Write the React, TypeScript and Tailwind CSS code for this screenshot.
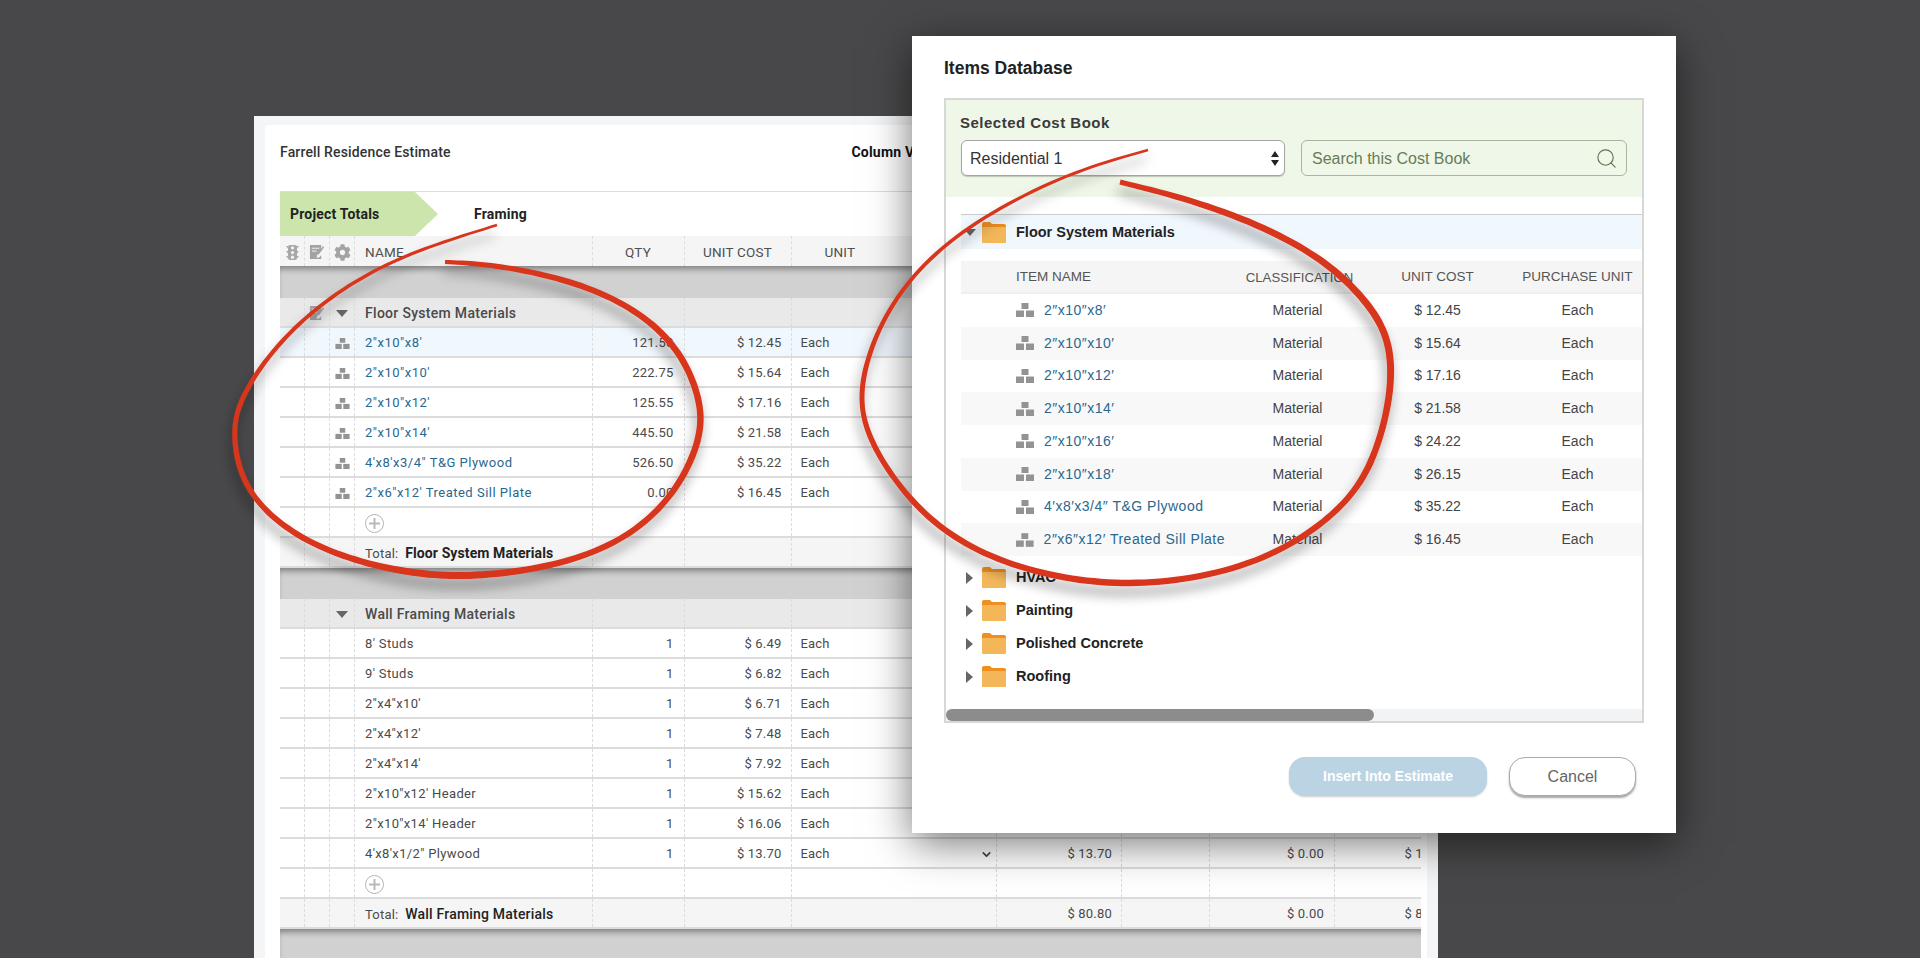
import { ChevronDown, Search } from "lucide-react";
import { FaCog } from "react-icons/fa";

const tableCols =
  "grid grid-cols-[25px_25px_25px_237.5px_92px_107px_205.5px_125px_88px_125px_125px]";
const dialogCols = "grid grid-cols-[264px_145px_135px_145px]";

const floorItems = [
  { name: "2″x10″x8′", qty: "121.50", cost: "$ 12.45", active: true },
  { name: "2″x10″x10′", qty: "222.75", cost: "$ 15.64" },
  { name: "2″x10″x12′", qty: "125.55", cost: "$ 17.16" },
  { name: "2″x10″x14′", qty: "445.50", cost: "$ 21.58" },
  { name: "4′x8′x3/4″ T&G Plywood", qty: "526.50", cost: "$ 35.22" },
  { name: "2″x6″x12′ Treated Sill Plate", qty: "0.00", cost: "$ 16.45" },
];

const wallItems = [
  { name: "8' Studs", cost: "$ 6.49" },
  { name: "9' Studs", cost: "$ 6.82" },
  { name: "2''x4''x10'", cost: "$ 6.71" },
  { name: "2''x4''x12'", cost: "$ 7.48" },
  { name: "2''x4''x14'", cost: "$ 7.92" },
  { name: "2\"x10\"x12' Header", cost: "$ 15.62" },
  { name: "2\"x10\"x14' Header", cost: "$ 16.06" },
  { name: "4'x8'x1/2\" Plywood", cost: "$ 13.70" },
];

const bookItems = [
  { name: "2″x10″x8′", cost: "$ 12.45" },
  { name: "2″x10″x10′", cost: "$ 15.64" },
  { name: "2″x10″x12′", cost: "$ 17.16" },
  { name: "2″x10″x14′", cost: "$ 21.58" },
  { name: "2″x10″x16′", cost: "$ 24.22" },
  { name: "2″x10″x18′", cost: "$ 26.15" },
  { name: "4′x8′x3/4″ T&G Plywood", cost: "$ 35.22" },
  { name: "2″x6″x12′ Treated Sill Plate", cost: "$ 16.45" },
];

const folders = ["HVAC", "Painting", "Polished Concrete", "Roofing"];

type Pt = [number, number, number];

// red marker strokes, traced as x, y, stroke width
const leftLoop: Pt[] = [
  [497, 225, 2.5], [442, 242, 3], [392, 260, 3.2], [342, 288, 3.6], [298, 322, 4],
  [262, 362, 4.5], [238, 403, 5], [233, 427, 5], [236, 463, 5.5], [250, 497, 5.5],
  [282, 527, 6], [322, 550, 6], [375, 567, 6.5], [425, 575, 7], [465, 577, 7],
  [525, 572, 6.5], [585, 558, 6], [632, 535, 6], [668, 503, 6], [692, 463, 6.5],
  [703, 427, 6.5], [700, 400, 6.5], [688, 365, 6.5], [665, 332, 6.5], [625, 302, 6],
  [575, 282, 6], [525, 270, 5.5], [478, 263, 5], [445, 262, 4],
];

const rightLoop: Pt[] = [
  [1148, 150, 2.5], [1083, 167, 3], [1017, 197, 3.2], [950, 237, 3.6], [907, 280, 4],
  [877, 327, 4.5], [860, 380, 5], [861, 413, 5], [871, 443, 5.5], [893, 479, 5.5],
  [923, 515, 6], [963, 545, 6], [1017, 569, 6], [1083, 582, 6.5], [1133, 585, 6.5],
  [1200, 579, 6], [1267, 560, 6], [1317, 529, 6], [1350, 499, 6], [1372, 467, 6.5],
  [1388, 413, 6.5], [1393, 370, 7], [1388, 335, 7], [1372, 308, 7], [1345, 278, 7],
  [1310, 250, 6.5], [1250, 220, 6.5], [1183, 197, 6], [1120, 182, 5],
];

function brushPath(pts: Pt[]) {
  let samples: Pt[] = [];
  for (let i = 0; i < pts.length - 1; i++) {
    const p0 = pts[Math.max(i - 1, 0)];
    const p1 = pts[i];
    const p2 = pts[i + 1];
    const p3 = pts[Math.min(i + 2, pts.length - 1)];
    for (let s = 0; s < 8; s++) {
      const t = s / 8;
      const at = (k: number) =>
        0.5 *
        (2 * p1[k] +
          (p2[k] - p0[k]) * t +
          (2 * p0[k] - 5 * p1[k] + 4 * p2[k] - p3[k]) * t * t +
          (3 * p1[k] - p0[k] - 3 * p2[k] + p3[k]) * t * t * t);
      samples.push([at(0), at(1), p1[2] + (p2[2] - p1[2]) * t]);
    }
  }
  samples.push(pts[pts.length - 1]);

  // trace points are hand-read, so iron out the kinks
  for (let pass = 0; pass < 60; pass++) {
    samples = samples.map((p, i) => {
      if (i === 0 || i === samples.length - 1) return p;
      const l = samples[i - 1];
      const r = samples[i + 1];
      return [(l[0] + 2 * p[0] + r[0]) / 4, (l[1] + 2 * p[1] + r[1]) / 4, p[2]] as Pt;
    });
  }

  const a: string[] = [];
  const b: string[] = [];
  samples.forEach((p, i) => {
    const prev = samples[Math.max(i - 1, 0)];
    const next = samples[Math.min(i + 1, samples.length - 1)];
    const dx = next[0] - prev[0];
    const dy = next[1] - prev[1];
    const len = Math.hypot(dx, dy) || 1;
    const nx = (-dy / len) * (p[2] / 2);
    const ny = (dx / len) * (p[2] / 2);
    a.push(`${(p[0] + nx).toFixed(1)} ${(p[1] + ny).toFixed(1)}`);
    b.unshift(`${(p[0] - nx).toFixed(1)} ${(p[1] - ny).toFixed(1)}`);
  });
  return `M${a.join("L")}L${b.join("L")}Z`;
}

function BricksIcon({ width = 15, height = 11 }: { width?: number; height?: number }) {
  return (
    <svg width={width} height={height} viewBox="0 0 18 14" fill="#939393">
      <rect x="5.5" y="0" width="7" height="6" />
      <rect x="0" y="7.5" width="8" height="6.5" />
      <rect x="10" y="7.5" width="8" height="6.5" />
    </svg>
  );
}

function NoteIcon() {
  return (
    <svg width="16" height="16" viewBox="0 0 17 17">
      <path d="M1 1h12v5l-4 5-1 4 3-1 2-2v4H1z" fill="#a3a3a3" />
      <path d="M3 4.5h8M3 7.5h5" stroke="#f5f5f5" strokeWidth="1" />
      <path d="M15.5 3 9.5 11" stroke="#a3a3a3" strokeWidth="1.6" />
    </svg>
  );
}

function TrafficIcon() {
  return (
    <svg width="13" height="15" viewBox="0 0 13 15" fill="#a8a8a8">
      <rect x="2" y="0" width="9" height="15" rx="2" />
      <path d="M0 1h2v2.5zM13 1h-2v2.5zM0 6h2v2.5zM13 6h-2v2.5zM0 11h2v2.5zM13 11h-2v2.5z" />
      <circle cx="6.5" cy="2.8" r="1.6" fill="#f5f5f5" />
      <circle cx="6.5" cy="7.5" r="1.6" fill="#f5f5f5" />
      <circle cx="6.5" cy="12.2" r="1.6" fill="#f5f5f5" />
    </svg>
  );
}

function FolderIcon() {
  return (
    <svg width="24" height="21" viewBox="0 0 24 21">
      <path d="M0 2a2 2 0 0 1 2-2h6l2 2h12a2 2 0 0 1 2 2v5H0z" fill="#ef8f1f" />
      <path d="M0 5h24v15a1 1 0 0 1-1 1H1a1 1 0 0 1-1-1z" fill="#f3b75a" />
    </svg>
  );
}

function AddIcon() {
  return (
    <div className="flex h-[19px] w-[19px] items-center justify-center rounded-full border border-[#b5b5b5] bg-white">
      <svg width="11" height="11" viewBox="0 0 11 11">
        <path d="M5.5 0v11M0 5.5h11" stroke="#b9b9b9" strokeWidth="2" />
      </svg>
    </div>
  );
}

function Cell({ className = "", children }: { className?: string; children?: React.ReactNode }) {
  return (
    <div className={`flex items-center overflow-hidden whitespace-nowrap border-r border-dashed border-[#dcdcdc] pt-[2px] ${className}`}>
      {children}
    </div>
  );
}

function TableRow({
  className = "",
  icon,
  second,
  name,
  qty,
  cost,
  unit,
  unitCost,
  extra,
  last,
}: {
  className?: string;
  icon?: React.ReactNode;
  second?: React.ReactNode;
  name?: React.ReactNode;
  qty?: string;
  cost?: string;
  unit?: string;
  unitCost?: string;
  extra?: string;
  last?: string;
}) {
  return (
    <div className={`${tableCols} h-[30px] border-b-2 border-[#dcdcdc] text-[13px] tracking-[0.2px] text-[#4a4a4a] ${className}`}>
      <Cell />
      <Cell className="justify-center">{second}</Cell>
      <Cell className="justify-center">{icon}</Cell>
      <Cell className="pl-[10px]">{name}</Cell>
      <Cell className="justify-end pr-[10px]">{qty}</Cell>
      <Cell className="justify-end pr-[9px]">{cost}</Cell>
      <Cell className="justify-between pl-[9px] pr-[3px]">
        {unit}
        {unit && unitCost && <ChevronDown size={13} strokeWidth={3} className="text-[#444]" />}
      </Cell>
      <Cell className="justify-end pr-[9px]">{unitCost}</Cell>
      <Cell />
      <Cell className="justify-end pr-[10px]">{extra}</Cell>
      <Cell className="justify-end pr-[10px]">{last}</Cell>
    </div>
  );
}

function DownTriangle() {
  return (
    <svg width="12" height="7" viewBox="0 0 12 7">
      <path d="M0 0h12L6 7z" fill="#666" />
    </svg>
  );
}

function TableHeader() {
  return (
    <div className={`${tableCols} h-[30px] bg-[#f5f5f5] text-[13.5px] tracking-[0.2px] text-[#4f4f4f]`}>
      <Cell className="justify-center"><TrafficIcon /></Cell>
      <Cell className="justify-center"><NoteIcon /></Cell>
      <Cell className="justify-center text-[17px] text-[#a3a3a3]"><FaCog /></Cell>
      <Cell className="pl-[10px]">NAME</Cell>
      <Cell className="justify-center">QTY</Cell>
      <Cell className="justify-center">UNIT COST</Cell>
      <Cell className="pl-[33px]">UNIT</Cell>
      <Cell />
      <Cell />
      <Cell />
      <Cell />
    </div>
  );
}

function Band({ className = "" }: { className?: string }) {
  return <div className={`bg-[#d1d1d1] shadow-[inset_0_6px_6px_-3px_rgba(0,0,0,0.4)] ${className}`} />;
}

function EstimateSheet() {
  return (
    <div className="ml-[254px] h-[842px] w-[1184px] overflow-hidden bg-[#f4f5f6] pl-[11px] pr-[11px] pt-[9px]">
      <div className="h-full rounded-t bg-white pl-[15px] pr-[6px] font-['Roboto',sans-serif]">
        <div className="flex h-[66px] items-start pt-[17px]">
          <div className="w-[571.5px] text-[14px] font-medium tracking-[0.15px] text-[#333]">Farrell Residence Estimate</div>
          <div className="text-[14px] font-bold tracking-[0.2px] text-[#111]">Column View</div>
        </div>
        <div className="flex h-[45px] items-center border-t border-[#ddd] text-[14px] font-bold tracking-[0.2px] text-[#222]">
          <div className="flex h-full w-[158px] items-center bg-[#cbe5ad] pl-[10px] [clip-path:polygon(0_0,135px_0,158px_50%,135px_100%,0_100%)]">
            Project Totals
          </div>
          <div className="ml-[36px]">Framing</div>
        </div>
        <div className="overflow-hidden">
          <div className="w-[1300px]">
            <TableHeader />
            <Band className="h-[32px]" />
            <TableRow
              className="bg-[#e9e9e9] text-[14px] font-medium tracking-[0.3px]"
              second={<NoteIcon />}
              icon={<DownTriangle />}
              name="Floor System Materials"
            />
            {floorItems.map((row) => (
              <TableRow
                key={row.name}
                className={row.active ? "bg-[#f0f7fd]" : "bg-white"}
                icon={<BricksIcon />}
                name={<span className="tracking-[0.5px] text-[#29678f]">{row.name}</span>}
                qty={row.qty}
                cost={row.cost}
                unit="Each"
              />
            ))}
            <TableRow name={<AddIcon />} />
            <TableRow
              className="h-[29px] bg-[#f5f5f5]"
              name={<span>Total:&nbsp; <b className="text-[14px] tracking-[0.1px] text-[#222]">Floor System Materials</b></span>}
            />
            <Band className="h-[31px]" />
            <TableRow
              className="bg-[#e9e9e9] text-[14px] font-medium tracking-[0.3px]"
              icon={<DownTriangle />}
              name="Wall Framing Materials"
            />
            {wallItems.map((row) => (
              <TableRow
                key={row.name}
                name={<span className="tracking-[0.35px]">{row.name}</span>}
                qty="1"
                cost={row.cost}
                unit="Each"
                unitCost={row.cost}
                extra="$ 0.00"
                last={row.cost}
              />
            ))}
            <TableRow name={<AddIcon />} />
            <TableRow
              className="h-[29px] bg-[#f5f5f5]"
              name={<span>Total:&nbsp; <b className="text-[14px] font-medium tracking-[0.2px] text-[#222]">Wall Framing Materials</b></span>}
              unitCost="$ 80.80"
              extra="$ 0.00"
              last="$ 80.80"
            />
            <Band className="h-[40px]" />
          </div>
        </div>
      </div>
    </div>
  );
}

function ItemsDialog() {
  return (
    <div className="absolute left-[912px] top-[36px] flex h-[797px] w-[764px] flex-col bg-white px-[32px] pt-[20px] font-['Liberation_Sans',sans-serif] shadow-[0_10px_40px_rgba(0,0,0,0.55)]">
      <div className="text-[17.5px] font-bold leading-[24px] text-[#222]">Items Database</div>
      <div className="mt-[18px] flex h-[625px] flex-col overflow-hidden border-2 border-[#d5d8d5]">
        <div className="h-[97px] shrink-0 bg-[#eff7e8] px-[14px] pt-[13px]">
          <div className="text-[15px] font-bold leading-[19px] tracking-[0.5px] text-[#3a3a3a]">Selected Cost Book</div>
          <div className="ml-[1px] mt-[8px] flex gap-[16px]">
            <div className="flex h-[36px] w-[324px] items-center justify-between rounded-[6px] border border-[#a5a5a5] bg-white pl-[8px] pr-[5px] pt-[1px] text-[16px] text-[#333] shadow-[0_1px_1px_rgba(0,0,0,0.2)]">
              Residential 1
              <svg width="8" height="15" viewBox="0 0 8 15" fill="#222">
                <path d="M4 0 8 6H0zM4 15 0 9h8z" />
              </svg>
            </div>
            <div className="flex h-[36px] w-[326px] items-center justify-between rounded-[6px] border border-[#a9b5a0] pl-[10px] pr-[8px] pt-[1px] text-[16px] text-[#667c58]">
              Search this Cost Book
              <Search size={23} strokeWidth={1.2} className="text-[#5d7350]" />
            </div>
          </div>
        </div>
        <div className="ml-[15px] mt-[17px] w-[681px] shrink-0">
          <div className="flex h-[35px] items-center border-t border-[#ccc] bg-[#f0f7fd] pl-[3px]">
            <DownTriangle />
            <span className="ml-[6px] flex"><FolderIcon /></span>
            <span className="ml-[10px] pt-[2px] text-[14.5px] font-bold text-[#222]">Floor System Materials</span>
          </div>
          <div className={`${dialogCols} mt-[12px] h-[33px] items-center border-b-2 border-[#eee] bg-[#f5f5f5] pt-[2px] text-[13.5px] text-[#555]`}>
            <div className="pl-[55px]">ITEM NAME</div>
            <div className="whitespace-nowrap pl-[4px] text-center text-[13.2px]">CLASSIFICATION</div>
            <div className="text-center">UNIT COST</div>
            <div className="whitespace-nowrap text-center">PURCHASE UNIT</div>
          </div>
          {bookItems.map((row, i) => (
            <div
              key={row.name}
              className={`${dialogCols} h-[32.75px] items-center text-[14px] text-[#444] ${i % 2 === 1 ? "bg-[#f8f8f8]" : "bg-white"}`}
            >
              <div className="flex items-center gap-[10px] pl-[55px]">
                <BricksIcon width={18} height={14} />
                <span className="whitespace-nowrap tracking-[0.5px] text-[#29678f]">{row.name}</span>
              </div>
              <div className="text-center">Material</div>
              <div className="text-center">{row.cost}</div>
              <div className="text-center">Each</div>
            </div>
          ))}
          <div className="mt-[5px]">
            {folders.map((f) => (
              <div key={f} className="flex h-[33px] items-center pl-[5px]">
                <svg width="7" height="12" viewBox="0 0 7 12">
                  <path d="M0 0v12l7-6z" fill="#666" />
                </svg>
                <span className="ml-[9px] flex"><FolderIcon /></span>
                <span className="ml-[10px] text-[14.5px] font-bold text-[#222]">{f}</span>
              </div>
            ))}
          </div>
        </div>
        <div className="mt-auto h-[12px] shrink-0 bg-[#f2f3f5]">
          <div className="h-full w-[428px] rounded-full bg-[#8c8c8c]" />
        </div>
      </div>
      <div className="mr-[8px] mt-[34px] flex justify-end gap-[22px]">
        <div className="flex h-[39px] w-[198px] items-center justify-center rounded-[16px] bg-[#bbd4e4] text-[14px] font-bold text-white shadow-[0_1px_2px_rgba(0,0,0,0.2)]">
          Insert Into Estimate
        </div>
        <div className="flex h-[39px] w-[127px] items-center justify-center rounded-[16px] border border-[#aaa] bg-white text-[16px] text-[#666] shadow-[0_2px_2px_rgba(0,0,0,0.35)]">
          Cancel
        </div>
      </div>
    </div>
  );
}

export default function App() {
  return (
    <div className="relative h-[958px] w-[1920px] overflow-hidden bg-[#48484a] pt-[116px]">
      <EstimateSheet />
      <ItemsDialog />
      <svg className="pointer-events-none absolute left-0 top-0" width="1920" height="958" viewBox="0 0 1920 958">
        <defs>
          <filter id="markerShadow" x="-10%" y="-10%" width="120%" height="125%">
            <feDropShadow dx="-2" dy="9" stdDeviation="6" floodColor="#000" floodOpacity="0.4" />
          </filter>
        </defs>
        <g fill="#d7351f" filter="url(#markerShadow)">
          <path d={brushPath(leftLoop)} />
          <path d={brushPath(rightLoop)} />
        </g>
      </svg>
    </div>
  );
}
